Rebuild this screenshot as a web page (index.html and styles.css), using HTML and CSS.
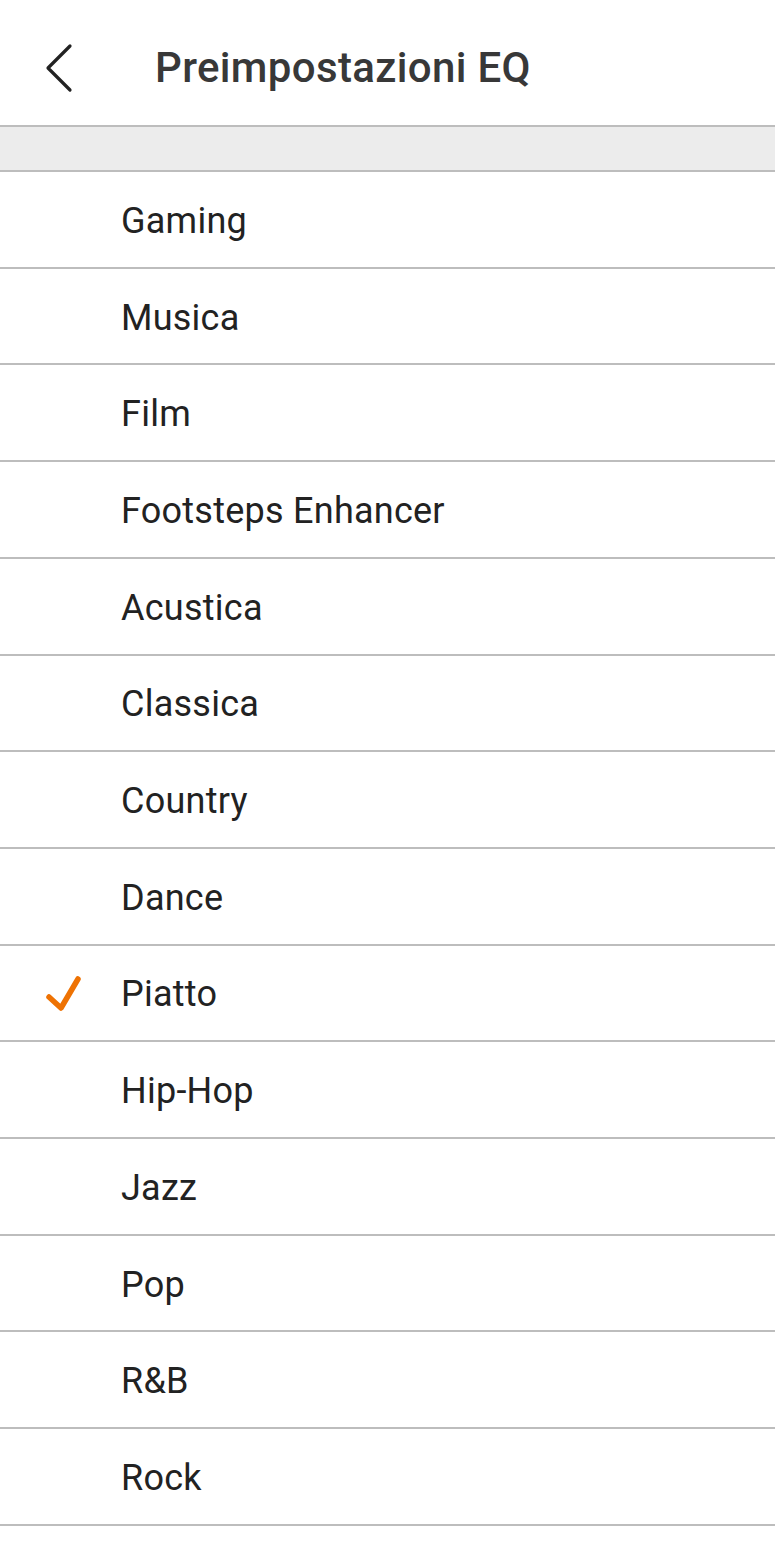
FILE: index.html
```html
<!DOCTYPE html>
<html lang="it">
<head>
<meta charset="utf-8">
<title>Preimpostazioni EQ</title>
<link rel="stylesheet" href="styles.css">
</head>
<body>
<div class="screen">
  <header class="topbar">
    <button class="back" aria-label="Indietro">
      <svg width="44" height="56" viewBox="0 0 44 56"><path d="M26 6 L4 28 L26 50" fill="none" stroke="#222" stroke-width="3.2" stroke-linecap="round" stroke-linejoin="round"/></svg>
    </button>
    <h1 class="title">Preimpostazioni EQ</h1>
  </header>
  <div class="band"></div>
  <ul class="list">
    <li class="item"><span class="mark"></span><span class="label">Gaming</span></li>
    <li class="item"><span class="mark"></span><span class="label">Musica</span></li>
    <li class="item"><span class="mark"></span><span class="label">Film</span></li>
    <li class="item"><span class="mark"></span><span class="label">Footsteps Enhancer</span></li>
    <li class="item"><span class="mark"></span><span class="label">Acustica</span></li>
    <li class="item"><span class="mark"></span><span class="label">Classica</span></li>
    <li class="item"><span class="mark"></span><span class="label">Country</span></li>
    <li class="item"><span class="mark"></span><span class="label">Dance</span></li>
    <li class="item selected"><span class="mark"><svg width="40" height="40" viewBox="0 0 40 40"><path d="M6 24 L18 35 L35 6" fill="none" stroke="#ee7203" stroke-width="5.5" stroke-linecap="round" stroke-linejoin="round"/></svg></span><span class="label">Piatto</span></li>
    <li class="item"><span class="mark"></span><span class="label">Hip-Hop</span></li>
    <li class="item"><span class="mark"></span><span class="label">Jazz</span></li>
    <li class="item"><span class="mark"></span><span class="label">Pop</span></li>
    <li class="item"><span class="mark"></span><span class="label">R&amp;B</span></li>
    <li class="item"><span class="mark"></span><span class="label">Rock</span></li>
  </ul>
</div>
</body>
</html>
```
FILE: styles.css
```css
* { box-sizing: border-box; }
html, body { margin: 0; padding: 0; background: #fff; }
body { font-family: Roboto, "Noto Sans", "Liberation Sans", sans-serif; color: #222; }
.screen { width: 775px; }
.topbar {
  height: 127px;
  border-bottom: 2px solid #bdbdbd;
  display: flex;
  align-items: center;
  padding-top: 10px;
}
.back {
  background: none;
  border: 0;
  padding: 0;
  margin-left: 44px;
  width: 44px;
  height: 56px;
  display: flex;
  align-items: center;
}
.back svg { display: block; }
.title {
  margin: 0 0 0 67px;
  font-size: 42px;
  font-weight: 500;
  color: #383838;
  letter-spacing: 0.35px;
}
.band {
  height: 45px;
  background: #ececec;
  border-bottom: 2px solid #bdbdbd;
}
.list { list-style: none; margin: 0; padding: 0; }
.item {
  height: 96.71px;
  border-bottom: 2px solid #bdbdbd;
  display: flex;
  align-items: center;
  padding-top: 3px;
}
.mark {
  width: 121px;
  display: flex;
  justify-content: flex-start;
  padding-left: 43px;
}
.mark svg { display: block; margin-top: -2px; }
.label {
  font-size: 36px;
  letter-spacing: 0.25px;
  color: #222;
}
```
